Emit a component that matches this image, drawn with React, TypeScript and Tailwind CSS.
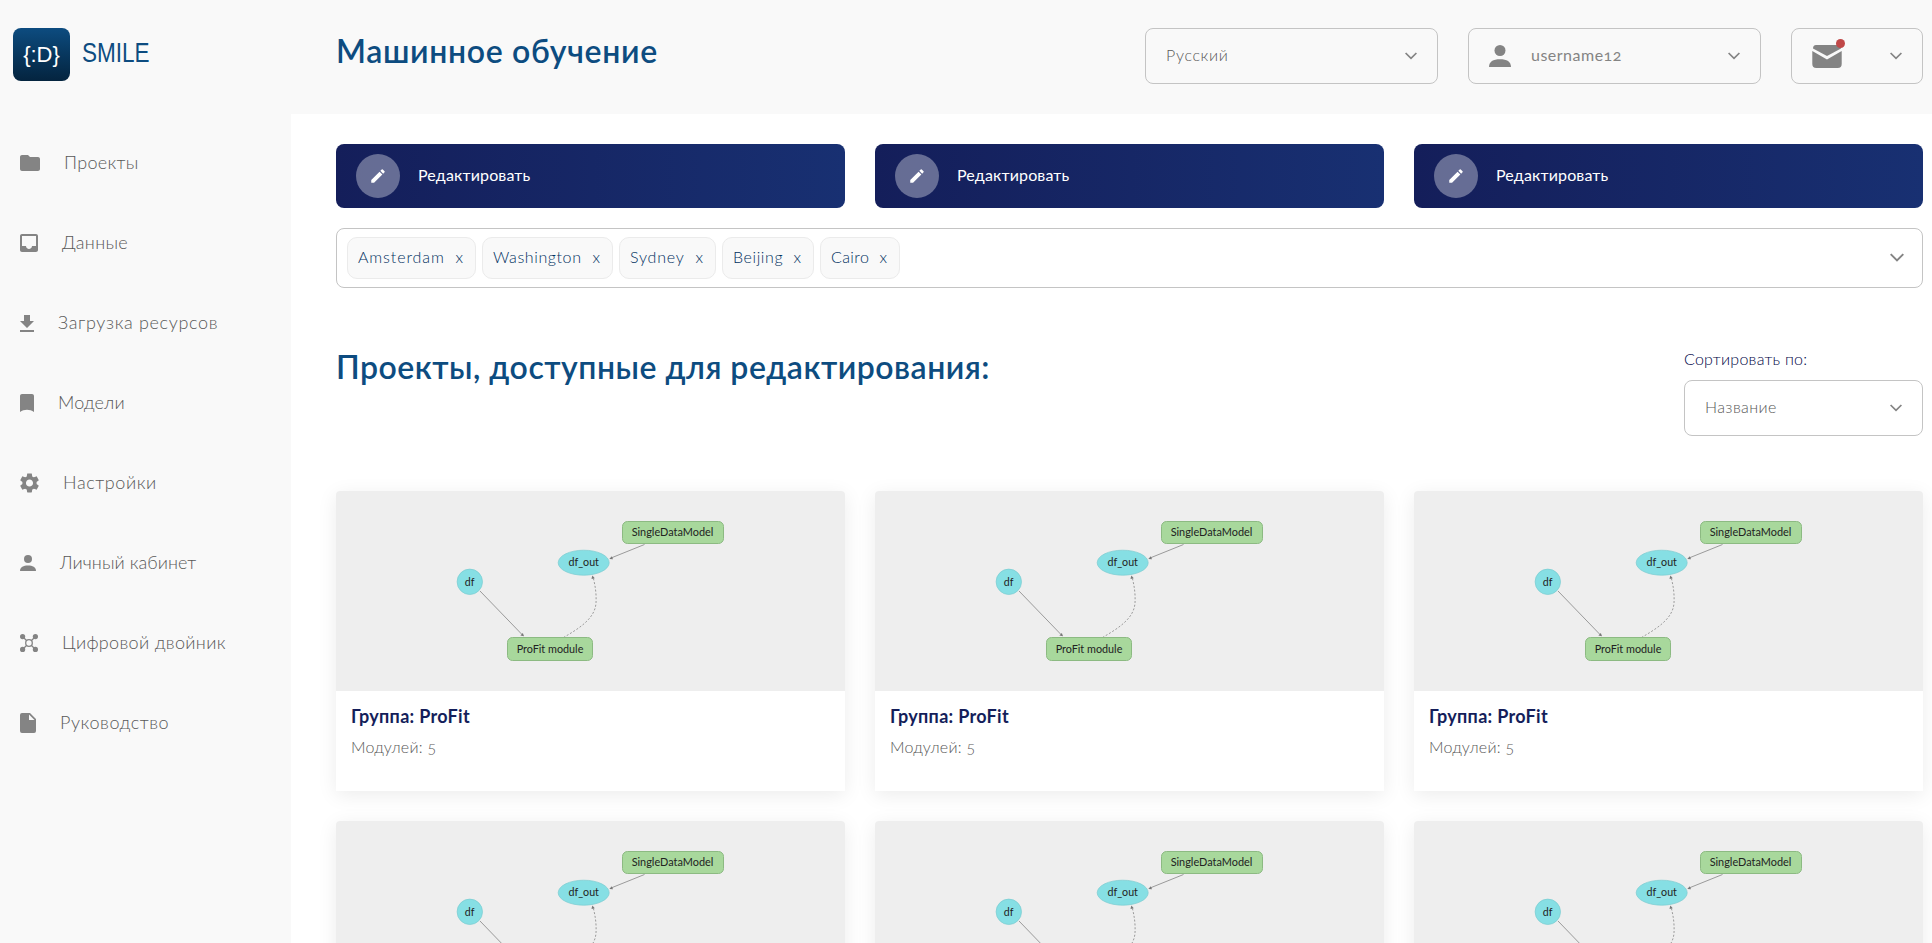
import { MdEdit } from 'react-icons/md'

const Chevron = ({ className = 'w-3' }: { className?: string }) => (
  <svg className={`shrink-0 ${className}`} viewBox='0 0 12 8' fill='none' stroke='#848484' strokeWidth='1.7'>
    <path d='M.6 1 6 6.400 11.400 1' />
  </svg>
)

const icons = {
  folder: (
    <svg width='20' height='16' viewBox='2 4 20 16' fill='#848484'>
      <path d='M10 4H4c-1.1 0-1.99.9-1.99 2L2 18c0 1.1.9 2 2 2h16c1.1 0 2-.9 2-2V8c0-1.1-.9-2-2-2h-8l-2-2z' />
    </svg>
  ),
  inbox: (
    <svg width='18' height='18' viewBox='3 3 18 18' fill='#848484'>
      <path d='M19 3H4.99C3.88 3 3.01 3.89 3.01 5L3 19c0 1.1.88 2 1.99 2H19c1.1 0 2-.9 2-2V5c0-1.1-.9-2-2-2zm0 12h-4c0 1.66-1.35 3-3 3s-3-1.34-3-3H4.99V5H19v10z' />
    </svg>
  ),
  download: (
    <svg width='14' height='17' viewBox='5 3 14 17' fill='#848484'>
      <path d='M19 9h-4V3H9v6H5l7 7 7-7zM5 18v2h14v-2H5z' />
    </svg>
  ),
  bookmark: (
    <svg width='14' height='18' viewBox='5 3 14 18' fill='#848484'>
      <path d='M17 3H7c-1.1 0-2 .9-2 2v16c4-3 10-3 14 0V5c0-1.1-.9-2-2-2z' />
    </svg>
  ),
  settings: (
    <svg width='19' height='20' viewBox='2.4 2 19.2 20' fill='#848484'>
      <path d='M19.14 12.94c.04-.3.06-.61.06-.94 0-.32-.02-.64-.07-.94l2.03-1.58c.18-.14.23-.41.12-.61l-1.92-3.32c-.12-.22-.37-.29-.59-.22l-2.39.96c-.5-.38-1.03-.7-1.62-.94l-.36-2.54c-.04-.24-.24-.41-.48-.41h-3.84c-.24 0-.43.17-.47.41l-.36 2.54c-.59.24-1.13.57-1.62.94l-2.39-.96c-.22-.08-.47 0-.59.22L2.74 8.87c-.12.21-.08.47.12.61l2.03 1.58c-.05.3-.09.63-.09.94s.02.64.07.94l-2.03 1.58c-.18.14-.23.41-.12.61l1.92 3.32c.12.22.37.29.59.22l2.39-.96c.5.38 1.03.7 1.62.94l.36 2.54c.05.24.24.41.48.41h3.84c.24 0 .44-.17.47-.41l.36-2.54c.59-.24 1.13-.56 1.62-.94l2.39.96c.22.08.47 0 .59-.22l1.92-3.32c.12-.22.07-.47-.12-.61l-2.01-1.58zM12 15.6c-1.98 0-3.6-1.62-3.6-3.6s1.62-3.6 3.6-3.6 3.6 1.62 3.6 3.6-1.62 3.6-3.6 3.6z' />
    </svg>
  ),
  person: (
    <svg width='16' height='16' viewBox='0 0 16 16' fill='#848484'>
      <circle cx='8' cy='4' r='4' />
      <path d='M0 16c0-4 3.500-5.500 8-5.500s8 1.500 8 5.500z' />
    </svg>
  ),
  twin: (
    <svg width='18' height='18' viewBox='0 0 18 18' fill='#848484'>
      <path d='M2.500 2.500l13 13M15.500 2.500l-13 13' stroke='#848484' strokeWidth='1.300' />
      <circle cx='9' cy='9' r='3.300' fill='#f9f9f9' stroke='#848484' strokeWidth='1.300' />
      <circle cx='2.600' cy='2.600' r='2.600' />
      <circle cx='15.400' cy='2.600' r='2.600' />
      <circle cx='2.600' cy='15.400' r='2.600' />
      <circle cx='15.400' cy='15.400' r='2.600' />
    </svg>
  ),
  file: (
    <svg width='16' height='20' viewBox='0 0 16 20' fill='#848484'>
      <path d='M2 0h8l6 6v12a2 2 0 0 1-2 2H2a2 2 0 0 1-2-2V2a2 2 0 0 1 2-2zM9 1.500V7h5.500z' fillRule='evenodd' />
    </svg>
  ),
}

const menu = [
  { icon: icons.folder, label: 'Проекты', className: 'tracking-[0.3px]' },
  { icon: icons.inbox, label: 'Данные', className: 'tracking-[0.3px]' },
  { icon: icons.download, label: 'Загрузка ресурсов', className: 'tracking-[0.65px]' },
  { icon: icons.bookmark, label: 'Модели', className: 'tracking-[0.1px]' },
  { icon: icons.settings, label: 'Настройки', className: 'tracking-[0.6px]' },
  { icon: icons.person, label: 'Личный кабинет', className: 'tracking-[0.05px]' },
  { icon: icons.twin, label: 'Цифровой двойник', className: 'tracking-[0.33px]' },
  { icon: icons.file, label: 'Руководство', className: 'tracking-[0.55px]' },
]

const cities = [
  { name: 'Amsterdam', className: 'w-[129px] tracking-[0.9px]' },
  { name: 'Washington', className: 'w-[131px] tracking-[0.6px]' },
  { name: 'Sydney', className: 'w-[97px] tracking-[0.8px]' },
  { name: 'Beijing', className: 'w-[92px] tracking-[0.6px]' },
  { name: 'Cairo', className: 'w-[80px] tracking-[0.4px]' },
]

const Sidebar = () => (
  <aside className='w-[291px] shrink-0 bg-[#f9f9f9]'>
    <div className='flex h-[114px] items-start pt-[28px] pl-[13px]'>
      <div className='flex h-[53px] w-[57px] items-center justify-center rounded-lg bg-linear-to-b from-[#0d4c80] to-[#04243f] font-["Liberation_Sans"] text-[22px] text-white'>
        {'{:D}'}
      </div>
      <span className='mt-[4px] ml-3 origin-left scale-x-[0.79] font-["Liberation_Sans"] text-[28.5px] leading-[40px] text-[#0d4c80]'>SMILE</span>
    </div>
    <nav className='flex flex-col pt-[9px] pl-5'>
      {menu.map((item) => (
        <div key={item.label} className='flex h-20 items-center gap-6 text-[18px] font-light text-[#585858]'>
          {item.icon}
          <span className={`pb-0.5 ${item.className}`}>{item.label}</span>
        </div>
      ))}
    </nav>
  </aside>
)

const Header = () => (
  <header className='flex h-[114px] items-start justify-between bg-[#f9f9f9] pt-[28px] pr-[9px] pl-[45px]'>
    <h1 className='text-[32px] leading-[46px] font-semibold tracking-[0.66px] text-[#0d4c80]'>Машинное обучение</h1>
    <div className='flex gap-[30px] text-[16px] text-[#848484]'>
      <div className='flex h-14 w-[293px] items-center justify-between rounded-lg border border-[#c4c4c4] px-5'>
        <span className='pb-0.5 font-light tracking-[0.65px] text-[#585858]'>Русский</span>
        <Chevron />
      </div>
      <div className='flex h-14 w-[293px] items-center rounded-lg border border-[#c4c4c4] px-5'>
        <svg width='22' height='22' viewBox='0 0 16 16' fill='#848484'>
          <circle cx='8' cy='4' r='4' />
          <path d='M0 16c0-4 3-5.700 8-5.700s8 1.700 8 5.700z' />
        </svg>
        <span className='ml-5 pb-0.5 tracking-[0.5px] oldstyle-nums'>username12</span>
        <Chevron className='ml-auto w-3' />
      </div>
      <div className='flex h-14 w-[132px] items-center justify-between rounded-lg border border-[#c4c4c4] px-5'>
        <div className='relative'>
          <svg width='30' height='24' viewBox='0 0 30 24' fill='#848484'>
            <path d='M1 4.500Q1 1 4 1h22q3 0 3 3.500L15 12z' />
            <path d='M.3 7 15 15.500 29.700 7v13q0 4-4 4H4.300q-4 0-4-4z' />
          </svg>
          <span className='absolute -top-[5px] -right-[3px] size-[9px] rounded-full bg-[#c04848]' />
        </div>
        <Chevron />
      </div>
    </div>
  </header>
)

const EditButton = () => (
  <button className='flex h-16 items-center rounded-lg bg-linear-to-r from-[#141e5a] to-[#183072] pl-5 text-[16px] text-white'>
    <span className='flex size-[44px] items-center justify-center rounded-full bg-white/35'>
      <MdEdit size={18} />
    </span>
    <span className='ml-[18px] pb-0.5 tracking-[0.15px]'>Редактировать</span>
  </button>
)

const Graph = () => (
  <svg className='block h-[200px] w-full rounded-t bg-[#eee]' viewBox='0 0 509 200' fontSize='10.600' textAnchor='middle' fill='#222'>
    <g stroke='#848484' strokeWidth='0.800' fill='none'>
      <path d='M144 100l42 43.500' />
      <path d='M308.500 53.500 275 67' />
      <path d='M227.500 146.500C242 138 259 128 260 112c.5-8-.5-17-3-26' strokeDasharray='2 1.800' />
    </g>
    <g fill='#777'>
      <path d='M188 145.200l-3.600-.8 2.400-2.400z' />
      <path d='M273.300 68l2.500-2.800 1.200 3z' />
      <path d='M256.300 84.500l2.500 2.700-3.300.7z' />
    </g>
    <rect x='286.500' y='30.500' width='101' height='22' rx='5' fill='#a8d89c' stroke='#8cba82' />
    <rect x='171.500' y='146.500' width='85' height='23' rx='5' fill='#a8d89c' stroke='#8cba82' />
    <ellipse cx='247.700' cy='71.700' rx='25.500' ry='12.500' fill='#86dfe4' stroke='#7accd0' strokeWidth='0.700' />
    <circle cx='133.800' cy='90.800' r='12.700' fill='#86dfe4' stroke='#7accd0' strokeWidth='0.700' />
    <text x='336.500' y='45' textLength='81.700' lengthAdjust='spacingAndGlyphs'>SingleDataModel</text>
    <text x='214' y='161.500' textLength='66.700' lengthAdjust='spacingAndGlyphs'>ProFit module</text>
    <text x='247.700' y='75' textLength='30.500' lengthAdjust='spacingAndGlyphs'>df_out</text>
    <text x='133.700' y='94.500'>df</text>
  </svg>
)

const Card = () => (
  <div className='h-[300px] rounded-t bg-white shadow-[0_4px_20px_rgba(0,0,0,0.08)]'>
    <Graph />
    <div className='px-[15px] pt-3'>
      <h3 className='text-[18px] leading-[27px] font-bold tracking-[0.3px] text-[#141e5a]'>Группа: ProFit</h3>
      <p className='mt-1 text-[16px] leading-[26px] font-light tracking-[0.25px] text-[#585858] oldstyle-nums'>Модулей: 5</p>
    </div>
  </div>
)

const App = () => {
  return (
    <div className='flex h-[943px] overflow-hidden bg-white font-[Lato,"Open_Sans",sans-serif]'>
      <Sidebar />
      <div className='min-w-0 flex-1'>
        <Header />
        <main className='pt-[30px] pr-[9px] pl-[45px]'>
          <div className='grid grid-cols-3 gap-[30px]'>
            <EditButton />
            <EditButton />
            <EditButton />
          </div>
          <div className='mt-5 flex h-[60px] items-center gap-1.5 rounded-lg border border-[#c4c4c4] pr-[18px] pl-2.5'>
            {cities.map((city) => (
              <div
                key={city.name}
                className={`flex h-[42px] items-center justify-between rounded-[10px] border border-[#ebebeb] bg-[#f9f9f9] pr-3 pb-0.5 pl-2.5 text-[16px] font-light text-[#00305e] ${city.className}`}
              >
                <span>{city.name}</span>
                <span className='tracking-normal'>x</span>
              </div>
            ))}
            <Chevron className='ml-auto w-3.5' />
          </div>
          <div className='mt-[56px] flex h-[147px] justify-between'>
            <h2 className='text-[32px] leading-[46px] font-semibold tracking-[0.5px] text-[#0d4c80]'>Проекты, доступные для редактирования:</h2>
            <div className='w-[239px]'>
              <label className='block text-[16px] leading-[30px] font-light tracking-[0.25px] text-[#000646]'>Сортировать по:</label>
              <div className='mt-1.5 flex h-14 items-center justify-between rounded-lg border border-[#c4c4c4] px-5 text-[16px] font-light text-[#585858]'>
                <span className='pb-0.5 tracking-[0.4px]'>Название</span>
                <Chevron />
              </div>
            </div>
          </div>
          <div className='grid grid-cols-3 gap-[30px]'>
            <Card />
            <Card />
            <Card />
            <Card />
            <Card />
            <Card />
          </div>
        </main>
      </div>
    </div>
  )
}

export default App
